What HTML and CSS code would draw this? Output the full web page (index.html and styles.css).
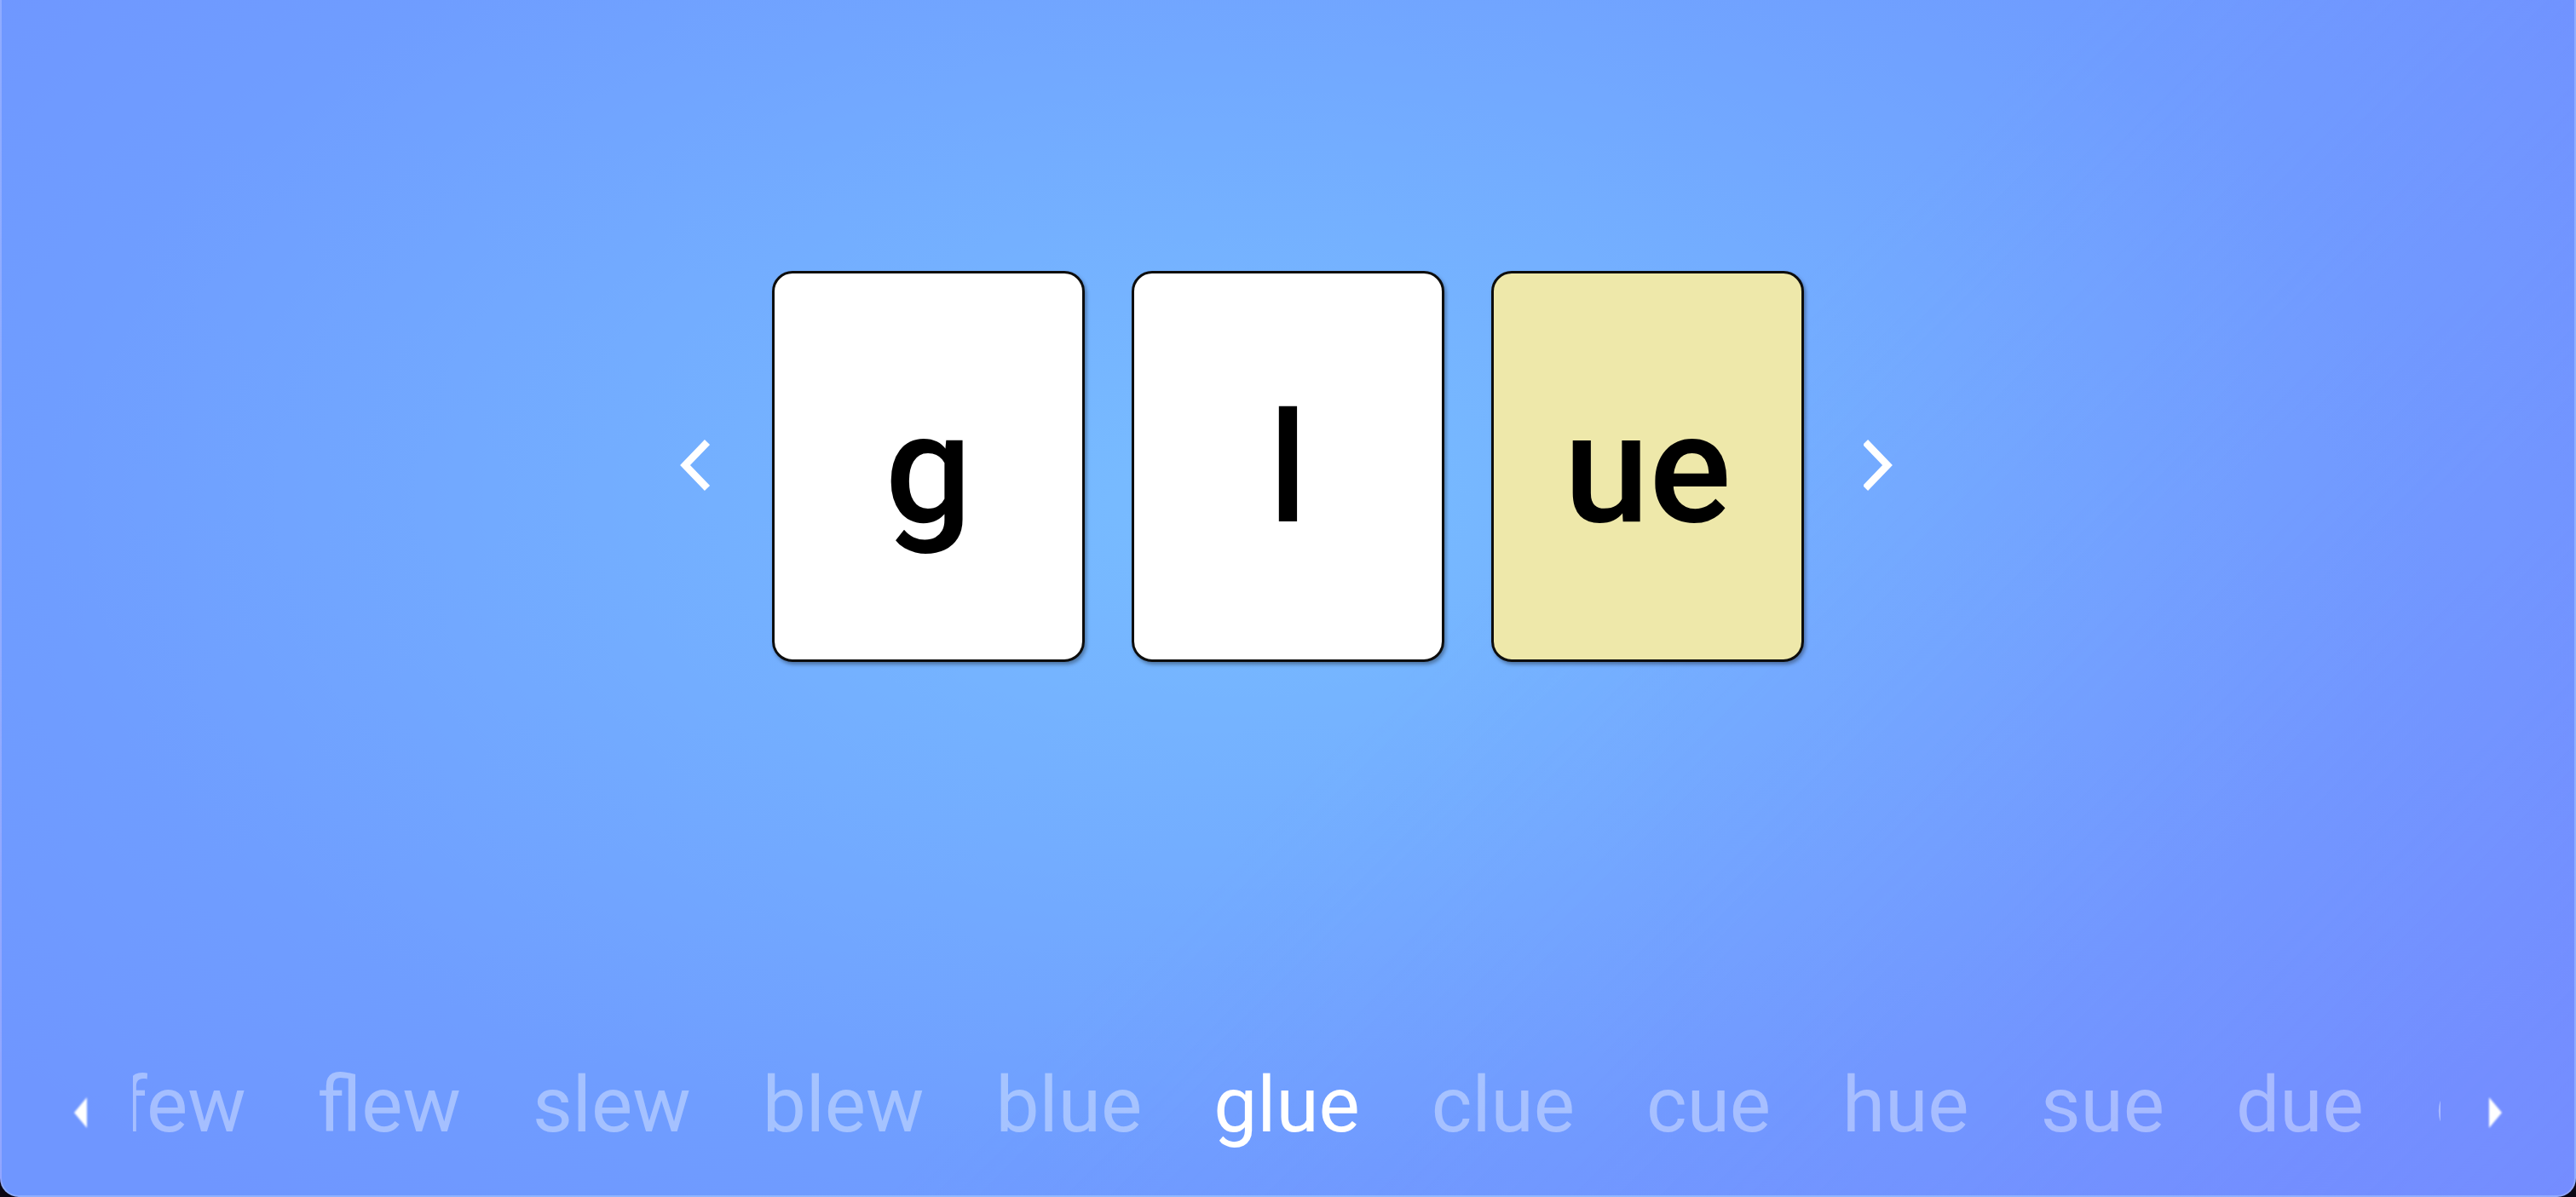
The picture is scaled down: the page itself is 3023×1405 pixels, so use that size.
FILE: index.html
```html
<!DOCTYPE html>
<html lang="en">
<head>
<meta charset="utf-8">
<title>Word builder</title>
<link rel="stylesheet" href="styles.css">
</head>
<body>
<div class="frame">
  <main class="stage">
    <div class="deck">
      <button class="chev" aria-label="Previous">
        <svg width="40" height="64" viewBox="0 0 40 64"><polyline points="34,3 8,30 34,57" fill="none" stroke="#fff" stroke-width="8.5"/></svg>
      </button>
      <div class="cards">
        <div class="card">g</div>
        <div class="card">l</div>
        <div class="card card-rime">ue</div>
      </div>
      <button class="chev" aria-label="Next">
        <svg width="40" height="64" viewBox="0 0 40 64"><polyline points="2,3 28,30 2,57" fill="none" stroke="#fff" stroke-width="8.5"/></svg>
      </button>
    </div>
  </main>
  <nav class="strip">
    <span class="tri">
      <svg width="15" height="36" viewBox="0 0 15 36"><polygon points="15,0 0,18 15,36" fill="#fff"/></svg>
    </span>
    <div class="viewport">
      <div class="side side-before">
        <span class="word">knew</span>
        <span class="word">few</span>
        <span class="word">flew</span>
        <span class="word">slew</span>
        <span class="word">blew</span>
        <span class="word">blue</span>
      </div>
      <span class="word word-active">glue</span>
      <div class="side side-after">
        <span class="word">clue</span>
        <span class="word">cue</span>
        <span class="word">hue</span>
        <span class="word">sue</span>
        <span class="word">due</span>
        <span class="word">crew</span>
        <span class="word">drew</span>
      </div>
    </div>
    <span class="tri">
      <svg width="15" height="36" viewBox="0 0 15 36"><polygon points="0,0 15,18 0,36" fill="#fff"/></svg>
    </span>
  </nav>
</div>
</body>
</html>
```
FILE: styles.css
```css
html, body {
  margin: 0;
  padding: 0;
  background: #0b0714;
}

.frame {
  box-sizing: border-box;
  width: 3023px;
  height: 1405px;
  display: flex;
  flex-direction: column;
  border: 2px solid rgba(255, 255, 255, 0.22);
  border-top: 0;
  border-radius: 0 0 22px 22px;
  background:
    linear-gradient(135deg, rgba(0, 0, 0, 0) 55%, rgba(128, 120, 255, 0.3) 100%),
    radial-gradient(ellipse 62% 75% at 48% 42%, #78bdff 0%, #73adff 40%, #6f9dff 75%, #6f96ff 100%);
  overflow: hidden;
}

.stage {
  flex: 1;
  display: flex;
  justify-content: center;
  align-items: flex-start;
  padding-top: 318px;
}

.deck {
  display: flex;
  align-items: center;
  gap: 70px;
}

.chev {
  display: flex;
  align-items: center;
  justify-content: center;
  width: 40px;
  height: 64px;
  padding: 0;
  margin: 0;
  border: 0;
  background: none;
}

.chev svg {
  display: block;
}

.cards {
  display: flex;
  gap: 55px;
}

.card {
  box-sizing: border-box;
  width: 367px;
  height: 459px;
  display: flex;
  align-items: center;
  justify-content: center;
  padding-top: 7px;
  background: #ffffff;
  border: 3px solid #0d0d0d;
  border-radius: 24px;
  box-shadow: 2px 3px 4px rgba(0, 0, 0, 0.35);
  font-family: "Roboto", sans-serif;
  font-weight: 500;
  font-size: 180px;
  line-height: 1;
  color: #000;
}

.card-rime {
  background: #eee8aa;
}

.strip {
  display: flex;
  align-items: center;
  padding: 0 85px 52px 85px;
  gap: 54px;
}

.tri {
  display: flex;
  margin-top: 16px;
}

.tri svg {
  display: block;
  filter: blur(0.8px);
}

.strip .tri:last-child {
  margin-left: 3px;
}

.viewport {
  flex: 1;
  min-width: 0;
  display: grid;
  grid-template-columns: 1fr auto 1fr;
  column-gap: 84px;
  overflow: hidden;
}

.side {
  display: flex;
  gap: 84px;
  overflow: hidden;
  min-width: 0;
}

.side-before {
  justify-content: flex-end;
}

.side-after {
  justify-content: flex-start;
}

.word {
  flex-shrink: 0;
  font-family: "Roboto", sans-serif;
  font-weight: 400;
  font-size: 91px;
  line-height: 1.172;
  color: rgba(255, 255, 255, 0.38);
  white-space: nowrap;
}

.word-active {
  color: #ffffff;
}
```
